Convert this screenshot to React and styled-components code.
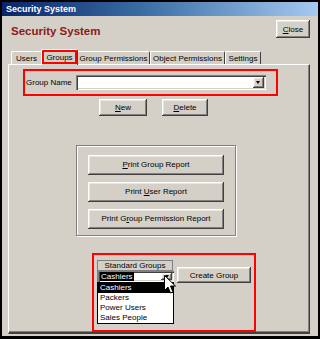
import styled, { createGlobalStyle } from 'styled-components'

const Global = createGlobalStyle`
    * { box-sizing: border-box; }
    body {
        margin: 0;
        background: #d4d0c8;
        font-family: "Liberation Sans", Arial, sans-serif;
        font-size: 8px;
        color: #000;
    }
`

const raised = `
    background: #d4d0c8;
    border: none;
    box-shadow: inset -1px -1px #404040, inset 1px 1px #ffffff,
        inset -2px -2px #808080, inset 2px 2px #e8e6e1;
`

const sunken = `
    background: #fff;
    box-shadow: inset 1px 1px #808080, inset 2px 2px #404040,
        inset -1px -1px #ffffff, inset -2px -2px #d4d0c8;
`

const Window = styled.div`
    width: 320px;
    height: 339px;
    border: 2px solid #000;
    border-bottom-width: 3px;
    background: #d4d0c8;
    display: flex;
    flex-direction: column;
`

const TitleBar = styled.div`
    height: 14px;
    background: linear-gradient(to right, #0a246a 0%, #3a6ea5 45%, #a6caf0 100%);
    color: #fff;
    font-weight: bold;
    font-size: 9px;
    padding-left: 4px;
    display: flex;
    align-items: center;
`

const Header = styled.div`
    display: flex;
    justify-content: space-between;
    align-items: flex-start;
    padding: 4px 8px 0 9px;
    height: 32px;
`

const Heading = styled.h1`
    margin: 5px 0 0;
    font-size: 11.5px;
    font-weight: bold;
    color: #8b1a1a;
`

const Button = styled.button`
    ${raised}
    font-family: inherit;
    font-size: 8px;
    color: #000;
    padding: 0;
    width: ${p => p.$w}px;
    height: ${p => p.$h || 17}px;
    margin-left: ${p => p.$ml || 0}px;
    margin-top: ${p => p.$mt || 0}px;
    display: flex;
    align-items: center;
    justify-content: center;
    u { text-decoration: underline; }
`

const Tabs = styled.div`
    display: flex;
    align-items: flex-end;
    height: 16px;
    margin-left: 9px;
    position: relative;
    z-index: 1;
`

const Tab = styled.div`
    height: ${p => (p.$active ? 16 : 13)}px;
    width: ${p => p.$w}px;
    margin: ${p => (p.$active ? '0 -1px -1px -1px' : '0')};
    background: #d4d0c8;
    border-top: 1px solid #fff;
    border-left: 1px solid #fff;
    border-right: 1px solid #404040;
    border-radius: 2px 2px 0 0;
    display: flex;
    align-items: center;
    justify-content: center;
    padding-top: ${p => (p.$active ? 0 : 1)}px;
    outline: ${p => (p.$active ? '2px solid #f00' : 'none')};
    outline-offset: -3px;
    position: relative;
    z-index: ${p => (p.$active ? 2 : 0)};
`

const Panel = styled.div`
    margin: 0 8px 0 6px;
    height: 270px;
    border-top: 1px solid #fff;
    border-left: 1px solid #fff;
    border-right: 1px solid #404040;
    border-bottom: 2px solid #404040;
    box-shadow: inset -1px -1px #808080;
    display: flex;
    flex-direction: column;
    position: relative;
`

const RedBox = styled.div`
    border: 2px solid #f00;
    margin-left: ${p => p.$ml}px;
    margin-top: ${p => p.$mt}px;
    width: ${p => p.$w}px;
    height: ${p => p.$h}px;
    display: flex;
    align-items: ${p => p.$align || 'center'};
`

const Label = styled.span`
    margin-left: 1px;
    margin-right: 4px;
    white-space: nowrap;
`

const Combo = styled.div`
    ${sunken}
    width: ${p => p.$w}px;
    height: ${p => p.$h}px;
    display: flex;
    align-items: center;
    justify-content: space-between;
    padding: 2px;
`

const Arrow = styled.div`
    ${raised}
    width: 11px;
    height: 100%;
    display: flex;
    align-items: center;
    justify-content: center;
    &::after {
        content: '';
        border-left: 2.5px solid transparent;
        border-right: 2.5px solid transparent;
        border-top: 3px solid #000;
    }
`

const Row = styled.div`
    display: flex;
    margin-left: ${p => p.$ml}px;
    margin-top: ${p => p.$mt}px;
`

const GroupFrame = styled.div`
    margin: 29px 0 0 67px;
    width: 160px;
    height: 92px;
    border: 1px solid #808080;
    box-shadow: 1px 1px #fff, inset 1px 1px #fff;
    display: flex;
    flex-direction: column;
    align-items: center;
    gap: 7px;
    padding-top: 9px;
`

const StdGroup = styled.div`
    margin-left: 3px;
    margin-top: 5px;
    width: 76px;
    position: relative;
    border: 1px solid #808080;
    border-bottom: none;
    height: 23px;
`

const StdHeader = styled.div`
    height: 10px;
    border-bottom: 1px solid #808080;
    text-align: center;
    line-height: 10px;
`

const Selected = styled.span`
    background: #000;
    color: #fff;
    padding: 0 1px;
    line-height: 9px;
`

const List = styled.ul`
    position: absolute;
    left: -1px;
    top: 21px;
    width: 77px;
    margin: 0;
    padding: 0;
    list-style: none;
    background: #fff;
    border: 1px solid #000;
    z-index: 3;
`

const Item = styled.li`
    height: 10px;
    line-height: 10px;
    padding-left: 2px;
    background: ${p => (p.$hl ? '#000' : '#fff')};
    color: ${p => (p.$hl ? '#fff' : '#000')};
`

const Cursor = styled.svg`
    position: absolute;
    left: 66px;
    top: 14px;
    z-index: 4;
`

const tabs = [
    { t: 'Users', w: 31 },
    { t: 'Groups', w: 37, active: true },
    { t: 'Group Permissions', w: 73 },
    { t: 'Object Permissions', w: 75 },
    { t: 'Settings', w: 36 },
]

const App = () => {
    return (
        <>
            <Global />
            <Window>
                <TitleBar>Security System</TitleBar>
                <Header>
                    <Heading>Security System</Heading>
                    <Button $w={34} $h={18}><span><u>C</u>lose</span></Button>
                </Header>
                <Tabs>
                    {tabs.map(tab => (
                        <Tab key={tab.t} $w={tab.w} $active={tab.active}>{tab.t}</Tab>
                    ))}
                </Tabs>
                <Panel>
                    <RedBox $ml={14} $mt={4} $w={255} $h={27}>
                        <Label>Group Name</Label>
                        <Combo $w={190} $h={15}>
                            <span />
                            <Arrow />
                        </Combo>
                    </RedBox>
                    <Row $ml={90} $mt={3}>
                        <Button $w={48}><span><u>N</u>ew</span></Button>
                        <Button $w={46} $ml={15}><span><u>D</u>elete</span></Button>
                    </Row>
                    <GroupFrame>
                        <Button $w={136} $h={20}><span><u>P</u>rint Group Report</span></Button>
                        <Button $w={136} $h={20}><span>Print <u>U</u>ser Report</span></Button>
                        <Button $w={136} $h={20}><span>Print G<u>r</u>oup Permission Report</span></Button>
                    </GroupFrame>
                    <RedBox $ml={83} $mt={17} $w={164} $h={79} $align="flex-start">
                        <StdGroup>
                            <StdHeader>Standard Groups</StdHeader>
                            <Combo $w={76} $h={11}>
                                <Selected>Cashiers</Selected>
                                <Arrow />
                            </Combo>
                            <List>
                                <Item $hl>Cashiers</Item>
                                <Item>Packers</Item>
                                <Item>Power Users</Item>
                                <Item>Sales People</Item>
                            </List>
                            <Cursor width="12" height="19" viewBox="0 0 12 19">
                                <path d="M0.5 0.5 L0.5 15.5 L4 12 L6.5 18 L9 17 L6.5 11 L11.5 11 Z" fill="#fff" stroke="#000" strokeWidth="1" />
                            </Cursor>
                        </StdGroup>
                        <Button $w={74} $h={16} $ml={4} $mt={12}>Create Group</Button>
                    </RedBox>
                </Panel>
            </Window>
        </>
    )
}

export default App
